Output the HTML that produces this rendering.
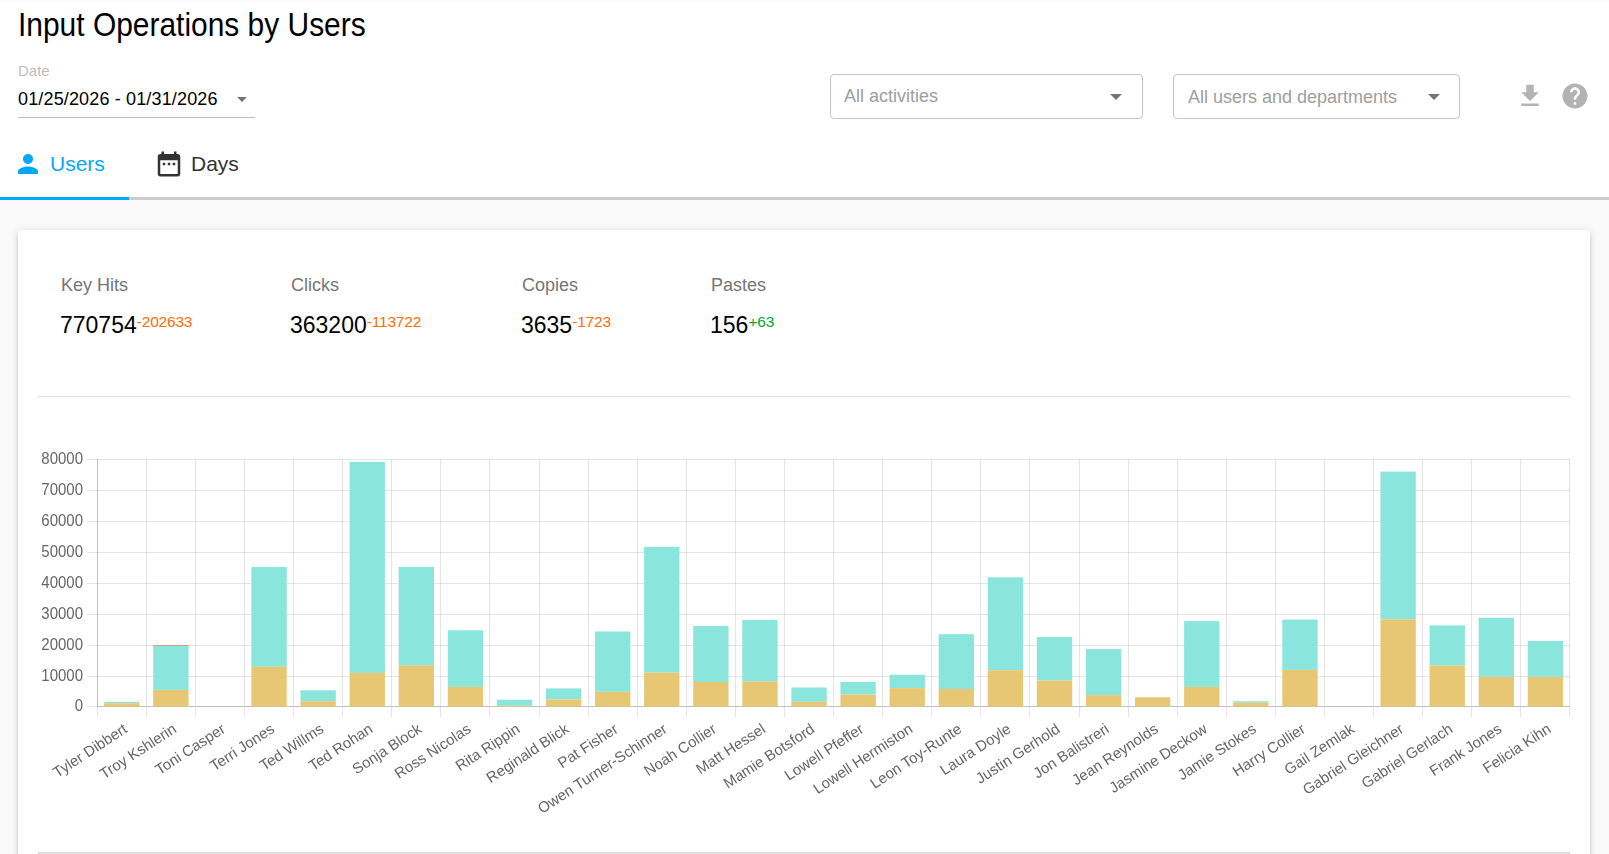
<!DOCTYPE html>
<html><head><meta charset="utf-8">
<style>
html,body{margin:0;padding:0;}
body{width:1609px;height:854px;overflow:hidden;position:relative;background:#fafafa;font-family:"Liberation Sans",sans-serif;}
.abs{position:absolute;white-space:nowrap;}
#top{position:absolute;left:0;top:0;width:1609px;height:197px;background:#fff;}
#topstrip{position:absolute;left:0;top:0;width:1609px;height:3px;background:#fcfcfc;}
.title{left:18px;top:5px;font-size:33px;color:#000;line-height:40px;transform:scaleX(0.907);transform-origin:0 0;}
.datelbl{left:18px;top:62px;font-size:15px;color:#bdbdbd;line-height:17px;}
.dateval{left:18px;top:88px;font-size:18px;color:#000;line-height:22px;letter-spacing:0.15px;}
.dateline{left:18px;top:117px;width:237px;height:1px;background:#bdbdbd;}
.sel{position:absolute;box-sizing:border-box;border:1px solid #c6c6c6;border-radius:4px;background:#fff;height:45px;top:74px;}
.seltxt{position:absolute;font-size:18px;color:#9e9e9e;line-height:20px;white-space:nowrap;}
.tri{position:absolute;width:0;height:0;border-left:5px solid transparent;border-right:5px solid transparent;border-top:5px solid #757575;}
.tri6{border-left-width:6px;border-right-width:6px;border-top-width:6px;}
.tabline{left:0;top:197px;width:1609px;height:3px;background:#cccccc;}
.tabsel{left:0;top:197px;width:129px;height:3px;background:#03a9f4;}
.tab{font-size:21px;line-height:25px;top:151px;}
.card{left:18px;top:230px;width:1572px;height:700px;background:#fff;border-radius:4px;box-shadow:0 1px 8px 0 rgba(0,0,0,.12),0 3px 4px 0 rgba(0,0,0,.14),0 3px 3px -2px rgba(0,0,0,.2);}
.slbl{font-size:18px;color:#757575;line-height:20px;top:275px;}
.sval{font-size:23px;color:#000;line-height:27px;top:312px;margin-left:-1px;}
.sval sup{font-size:15.5px;vertical-align:top;position:relative;top:-4.5px;letter-spacing:-0.2px;}
.neg{color:#ff6d00;}
.pos{color:#00a834;}
.sep{left:38px;top:396px;width:1532px;height:1px;background:#e0e0e0;}
.sep2{left:38px;top:852px;width:1532px;height:2px;background:#e0e0e0;}
svg text.yl{font-family:"Liberation Sans",sans-serif;font-size:15px;fill:#666;}
svg text.xl{font-family:"Liberation Sans",sans-serif;font-size:15px;fill:#666;}
</style></head><body>
<div id="top"></div>
<div id="topstrip"></div>
<div class="abs title">Input Operations by Users</div>
<div class="abs datelbl">Date</div>
<div class="abs dateval">01/25/2026 - 01/31/2026</div>
<div class="tri" style="left:237px;top:97px;"></div>
<div class="abs dateline"></div>
<div class="sel" style="left:830px;width:313px;"></div>
<div class="seltxt" style="left:844px;top:86px;">All activities</div>
<div class="tri tri6" style="left:1110px;top:94px;"></div>
<div class="sel" style="left:1173px;width:287px;"></div>
<div class="seltxt" style="left:1188px;top:87px;">All users and departments</div>
<div class="tri tri6" style="left:1428px;top:94px;"></div>
<svg class="abs" style="left:1515px;top:81px" width="30" height="30" viewBox="0 0 24 24"><path fill="#b3b3b3" d="M19 9h-4V3H9v6H5l7 7 7-7zM5 18v2h14v-2H5z"/></svg>
<svg class="abs" style="left:1560px;top:81px" width="30" height="30" viewBox="0 0 24 24"><path fill="#b3b3b3" d="M12 2C6.48 2 2 6.48 2 12s4.48 10 10 10 10-4.48 10-10S17.52 2 12 2zm1 17h-2v-2h2v2zm2.07-7.750l-.9.92C13.45 12.9 13 13.5 13 15h-2v-.5c0-1.1.45-2.1 1.17-2.830l1.24-1.26c.37-.36.59-.86.59-1.41 0-1.1-.9-2-2-2s-2 .9-2 2H8c0-2.21 1.79-4 4-4s4 1.79 4 4c0 .88-.36 1.68-.93 2.250z"/></svg>
<svg class="abs" style="left:13px;top:149px" width="30" height="30" viewBox="0 0 24 24"><path fill="#03a9f4" d="M12 12c2.21 0 4-1.79 4-4s-1.79-4-4-4-4 1.79-4 4 1.79 4 4 4zm0 2c-2.67 0-8 1.34-8 4v2h16v-2c0-2.66-5.33-4-8-4z"/></svg>
<div class="abs tab" style="left:50px;color:#03a9f4;">Users</div>
<svg class="abs" style="left:154px;top:149px" width="30" height="30" viewBox="0 0 24 24"><path fill="#333" d="M9 11H7v2h2v-2zm4 0h-2v2h2v-2zm4 0h-2v2h2v-2zm2-7h-1V2h-2v2H8V2H6v2H5c-1.11 0-1.99.9-1.99 2L3 20c0 1.1.89 2 2 2h14c1.1 0 2-.9 2-2V6c0-1.1-.9-2-2-2zm0 16H5V9h14v11z"/></svg>
<div class="abs tab" style="left:191px;color:#333;">Days</div>
<div class="abs tabline"></div>
<div class="abs tabsel"></div>
<div class="abs card"></div>
<div class="abs slbl" style="left:61px;">Key Hits</div>
<div class="abs sval" style="left:61px;">770754<sup class="neg">-202633</sup></div>
<div class="abs slbl" style="left:291px;">Clicks</div>
<div class="abs sval" style="left:291px;">363200<sup class="neg">-113722</sup></div>
<div class="abs slbl" style="left:522px;">Copies</div>
<div class="abs sval" style="left:522px;">3635<sup class="neg">-1723</sup></div>
<div class="abs slbl" style="left:711px;">Pastes</div>
<div class="abs sval" style="left:711px;">156<sup class="pos">+63</sup></div>
<div class="abs sep"></div>
<svg class="abs" style="left:0;top:0;will-change:transform" width="1609" height="854" viewBox="0 0 1609 854">
<line x1="87" y1="459.5" x2="1570" y2="459.5" stroke="rgba(0,0,0,0.1)" stroke-width="1"/>
<line x1="87" y1="490.5" x2="1570" y2="490.5" stroke="rgba(0,0,0,0.1)" stroke-width="1"/>
<line x1="87" y1="521.5" x2="1570" y2="521.5" stroke="rgba(0,0,0,0.1)" stroke-width="1"/>
<line x1="87" y1="552.5" x2="1570" y2="552.5" stroke="rgba(0,0,0,0.1)" stroke-width="1"/>
<line x1="87" y1="583.5" x2="1570" y2="583.5" stroke="rgba(0,0,0,0.1)" stroke-width="1"/>
<line x1="87" y1="614.5" x2="1570" y2="614.5" stroke="rgba(0,0,0,0.1)" stroke-width="1"/>
<line x1="87" y1="645.5" x2="1570" y2="645.5" stroke="rgba(0,0,0,0.1)" stroke-width="1"/>
<line x1="87" y1="676.5" x2="1570" y2="676.5" stroke="rgba(0,0,0,0.1)" stroke-width="1"/>
<line x1="87" y1="706.5" x2="97" y2="706.5" stroke="rgba(0,0,0,0.1)" stroke-width="1"/>
<line x1="97" y1="706.5" x2="1570" y2="706.5" stroke="rgba(0,0,0,0.25)" stroke-width="1"/>
<line x1="97.5" y1="459" x2="97.5" y2="706" stroke="rgba(0,0,0,0.25)" stroke-width="1"/>
<line x1="97.5" y1="707" x2="97.5" y2="717" stroke="rgba(0,0,0,0.1)" stroke-width="1"/>
<line x1="146.5" y1="459" x2="146.5" y2="706" stroke="rgba(0,0,0,0.1)" stroke-width="1"/>
<line x1="146.5" y1="707" x2="146.5" y2="717" stroke="rgba(0,0,0,0.1)" stroke-width="1"/>
<line x1="195.5" y1="459" x2="195.5" y2="706" stroke="rgba(0,0,0,0.1)" stroke-width="1"/>
<line x1="195.5" y1="707" x2="195.5" y2="717" stroke="rgba(0,0,0,0.1)" stroke-width="1"/>
<line x1="244.5" y1="459" x2="244.5" y2="706" stroke="rgba(0,0,0,0.1)" stroke-width="1"/>
<line x1="244.5" y1="707" x2="244.5" y2="717" stroke="rgba(0,0,0,0.1)" stroke-width="1"/>
<line x1="293.5" y1="459" x2="293.5" y2="706" stroke="rgba(0,0,0,0.1)" stroke-width="1"/>
<line x1="293.5" y1="707" x2="293.5" y2="717" stroke="rgba(0,0,0,0.1)" stroke-width="1"/>
<line x1="342.5" y1="459" x2="342.5" y2="706" stroke="rgba(0,0,0,0.1)" stroke-width="1"/>
<line x1="342.5" y1="707" x2="342.5" y2="717" stroke="rgba(0,0,0,0.1)" stroke-width="1"/>
<line x1="391.5" y1="459" x2="391.5" y2="706" stroke="rgba(0,0,0,0.1)" stroke-width="1"/>
<line x1="391.5" y1="707" x2="391.5" y2="717" stroke="rgba(0,0,0,0.1)" stroke-width="1"/>
<line x1="440.5" y1="459" x2="440.5" y2="706" stroke="rgba(0,0,0,0.1)" stroke-width="1"/>
<line x1="440.5" y1="707" x2="440.5" y2="717" stroke="rgba(0,0,0,0.1)" stroke-width="1"/>
<line x1="489.5" y1="459" x2="489.5" y2="706" stroke="rgba(0,0,0,0.1)" stroke-width="1"/>
<line x1="489.5" y1="707" x2="489.5" y2="717" stroke="rgba(0,0,0,0.1)" stroke-width="1"/>
<line x1="539.5" y1="459" x2="539.5" y2="706" stroke="rgba(0,0,0,0.1)" stroke-width="1"/>
<line x1="539.5" y1="707" x2="539.5" y2="717" stroke="rgba(0,0,0,0.1)" stroke-width="1"/>
<line x1="588.5" y1="459" x2="588.5" y2="706" stroke="rgba(0,0,0,0.1)" stroke-width="1"/>
<line x1="588.5" y1="707" x2="588.5" y2="717" stroke="rgba(0,0,0,0.1)" stroke-width="1"/>
<line x1="637.5" y1="459" x2="637.5" y2="706" stroke="rgba(0,0,0,0.1)" stroke-width="1"/>
<line x1="637.5" y1="707" x2="637.5" y2="717" stroke="rgba(0,0,0,0.1)" stroke-width="1"/>
<line x1="686.5" y1="459" x2="686.5" y2="706" stroke="rgba(0,0,0,0.1)" stroke-width="1"/>
<line x1="686.5" y1="707" x2="686.5" y2="717" stroke="rgba(0,0,0,0.1)" stroke-width="1"/>
<line x1="735.5" y1="459" x2="735.5" y2="706" stroke="rgba(0,0,0,0.1)" stroke-width="1"/>
<line x1="735.5" y1="707" x2="735.5" y2="717" stroke="rgba(0,0,0,0.1)" stroke-width="1"/>
<line x1="784.5" y1="459" x2="784.5" y2="706" stroke="rgba(0,0,0,0.1)" stroke-width="1"/>
<line x1="784.5" y1="707" x2="784.5" y2="717" stroke="rgba(0,0,0,0.1)" stroke-width="1"/>
<line x1="833.5" y1="459" x2="833.5" y2="706" stroke="rgba(0,0,0,0.1)" stroke-width="1"/>
<line x1="833.5" y1="707" x2="833.5" y2="717" stroke="rgba(0,0,0,0.1)" stroke-width="1"/>
<line x1="882.5" y1="459" x2="882.5" y2="706" stroke="rgba(0,0,0,0.1)" stroke-width="1"/>
<line x1="882.5" y1="707" x2="882.5" y2="717" stroke="rgba(0,0,0,0.1)" stroke-width="1"/>
<line x1="931.5" y1="459" x2="931.5" y2="706" stroke="rgba(0,0,0,0.1)" stroke-width="1"/>
<line x1="931.5" y1="707" x2="931.5" y2="717" stroke="rgba(0,0,0,0.1)" stroke-width="1"/>
<line x1="980.5" y1="459" x2="980.5" y2="706" stroke="rgba(0,0,0,0.1)" stroke-width="1"/>
<line x1="980.5" y1="707" x2="980.5" y2="717" stroke="rgba(0,0,0,0.1)" stroke-width="1"/>
<line x1="1029.5" y1="459" x2="1029.5" y2="706" stroke="rgba(0,0,0,0.1)" stroke-width="1"/>
<line x1="1029.5" y1="707" x2="1029.5" y2="717" stroke="rgba(0,0,0,0.1)" stroke-width="1"/>
<line x1="1079.5" y1="459" x2="1079.5" y2="706" stroke="rgba(0,0,0,0.1)" stroke-width="1"/>
<line x1="1079.5" y1="707" x2="1079.5" y2="717" stroke="rgba(0,0,0,0.1)" stroke-width="1"/>
<line x1="1128.5" y1="459" x2="1128.5" y2="706" stroke="rgba(0,0,0,0.1)" stroke-width="1"/>
<line x1="1128.5" y1="707" x2="1128.5" y2="717" stroke="rgba(0,0,0,0.1)" stroke-width="1"/>
<line x1="1177.5" y1="459" x2="1177.5" y2="706" stroke="rgba(0,0,0,0.1)" stroke-width="1"/>
<line x1="1177.5" y1="707" x2="1177.5" y2="717" stroke="rgba(0,0,0,0.1)" stroke-width="1"/>
<line x1="1226.5" y1="459" x2="1226.5" y2="706" stroke="rgba(0,0,0,0.1)" stroke-width="1"/>
<line x1="1226.5" y1="707" x2="1226.5" y2="717" stroke="rgba(0,0,0,0.1)" stroke-width="1"/>
<line x1="1275.5" y1="459" x2="1275.5" y2="706" stroke="rgba(0,0,0,0.1)" stroke-width="1"/>
<line x1="1275.5" y1="707" x2="1275.5" y2="717" stroke="rgba(0,0,0,0.1)" stroke-width="1"/>
<line x1="1324.5" y1="459" x2="1324.5" y2="706" stroke="rgba(0,0,0,0.1)" stroke-width="1"/>
<line x1="1324.5" y1="707" x2="1324.5" y2="717" stroke="rgba(0,0,0,0.1)" stroke-width="1"/>
<line x1="1373.5" y1="459" x2="1373.5" y2="706" stroke="rgba(0,0,0,0.1)" stroke-width="1"/>
<line x1="1373.5" y1="707" x2="1373.5" y2="717" stroke="rgba(0,0,0,0.1)" stroke-width="1"/>
<line x1="1422.5" y1="459" x2="1422.5" y2="706" stroke="rgba(0,0,0,0.1)" stroke-width="1"/>
<line x1="1422.5" y1="707" x2="1422.5" y2="717" stroke="rgba(0,0,0,0.1)" stroke-width="1"/>
<line x1="1471.5" y1="459" x2="1471.5" y2="706" stroke="rgba(0,0,0,0.1)" stroke-width="1"/>
<line x1="1471.5" y1="707" x2="1471.5" y2="717" stroke="rgba(0,0,0,0.1)" stroke-width="1"/>
<line x1="1520.5" y1="459" x2="1520.5" y2="706" stroke="rgba(0,0,0,0.1)" stroke-width="1"/>
<line x1="1520.5" y1="707" x2="1520.5" y2="717" stroke="rgba(0,0,0,0.1)" stroke-width="1"/>
<line x1="1569.5" y1="459" x2="1569.5" y2="706" stroke="rgba(0,0,0,0.1)" stroke-width="1"/>
<line x1="1569.5" y1="707" x2="1569.5" y2="717" stroke="rgba(0,0,0,0.1)" stroke-width="1"/>
<text transform="translate(83,458.6) scale(1,1.09)" text-anchor="end" dominant-baseline="central" class="yl">80000</text>
<text transform="translate(83,489.6) scale(1,1.09)" text-anchor="end" dominant-baseline="central" class="yl">70000</text>
<text transform="translate(83,520.6) scale(1,1.09)" text-anchor="end" dominant-baseline="central" class="yl">60000</text>
<text transform="translate(83,551.6) scale(1,1.09)" text-anchor="end" dominant-baseline="central" class="yl">50000</text>
<text transform="translate(83,582.6) scale(1,1.09)" text-anchor="end" dominant-baseline="central" class="yl">40000</text>
<text transform="translate(83,613.6) scale(1,1.09)" text-anchor="end" dominant-baseline="central" class="yl">30000</text>
<text transform="translate(83,644.6) scale(1,1.09)" text-anchor="end" dominant-baseline="central" class="yl">20000</text>
<text transform="translate(83,675.6) scale(1,1.09)" text-anchor="end" dominant-baseline="central" class="yl">10000</text>
<text transform="translate(83,705.6) scale(1,1.09)" text-anchor="end" dominant-baseline="central" class="yl">0</text>
<rect x="104.12" y="701.8" width="35.34" height="1.40" fill="#8ae6dd"/>
<rect x="104.12" y="703.2" width="35.34" height="3.30" fill="#e8c774"/>
<rect x="153.21" y="645.9" width="35.34" height="44.00" fill="#8ae6dd"/>
<rect x="153.21" y="689.9" width="35.34" height="16.60" fill="#e8c774"/>
<rect x="251.39" y="566.9" width="35.34" height="99.90" fill="#8ae6dd"/>
<rect x="251.39" y="666.8" width="35.34" height="39.70" fill="#e8c774"/>
<rect x="300.48" y="690.3" width="35.34" height="10.90" fill="#8ae6dd"/>
<rect x="300.48" y="701.2" width="35.34" height="5.30" fill="#e8c774"/>
<rect x="349.57" y="461.9" width="35.34" height="211.00" fill="#8ae6dd"/>
<rect x="349.57" y="672.9" width="35.34" height="33.60" fill="#e8c774"/>
<rect x="398.66" y="566.9" width="35.34" height="98.40" fill="#8ae6dd"/>
<rect x="398.66" y="665.3" width="35.34" height="41.20" fill="#e8c774"/>
<rect x="447.75" y="630.3" width="35.34" height="56.60" fill="#8ae6dd"/>
<rect x="447.75" y="686.9" width="35.34" height="19.60" fill="#e8c774"/>
<rect x="496.84" y="699.7" width="35.34" height="6.10" fill="#8ae6dd"/>
<rect x="496.84" y="705.8" width="35.34" height="0.70" fill="#e8c774"/>
<rect x="545.93" y="688.4" width="35.34" height="11.00" fill="#8ae6dd"/>
<rect x="545.93" y="699.4" width="35.34" height="7.10" fill="#e8c774"/>
<rect x="595.02" y="631.5" width="35.34" height="60.30" fill="#8ae6dd"/>
<rect x="595.02" y="691.8" width="35.34" height="14.70" fill="#e8c774"/>
<rect x="644.11" y="546.8" width="35.34" height="125.80" fill="#8ae6dd"/>
<rect x="644.11" y="672.6" width="35.34" height="33.90" fill="#e8c774"/>
<rect x="693.20" y="626" width="35.34" height="56.00" fill="#8ae6dd"/>
<rect x="693.20" y="682" width="35.34" height="24.50" fill="#e8c774"/>
<rect x="742.29" y="619.9" width="35.34" height="61.50" fill="#8ae6dd"/>
<rect x="742.29" y="681.4" width="35.34" height="25.10" fill="#e8c774"/>
<rect x="791.38" y="687.5" width="35.34" height="14.30" fill="#8ae6dd"/>
<rect x="791.38" y="701.8" width="35.34" height="4.70" fill="#e8c774"/>
<rect x="840.47" y="682" width="35.34" height="12.50" fill="#8ae6dd"/>
<rect x="840.47" y="694.5" width="35.34" height="12.00" fill="#e8c774"/>
<rect x="889.56" y="674.7" width="35.34" height="13.40" fill="#8ae6dd"/>
<rect x="889.56" y="688.1" width="35.34" height="18.40" fill="#e8c774"/>
<rect x="938.65" y="634.2" width="35.34" height="54.80" fill="#8ae6dd"/>
<rect x="938.65" y="689" width="35.34" height="17.50" fill="#e8c774"/>
<rect x="987.74" y="577.3" width="35.34" height="92.90" fill="#8ae6dd"/>
<rect x="987.74" y="670.2" width="35.34" height="36.30" fill="#e8c774"/>
<rect x="1036.83" y="637" width="35.34" height="43.50" fill="#8ae6dd"/>
<rect x="1036.83" y="680.5" width="35.34" height="26.00" fill="#e8c774"/>
<rect x="1085.92" y="649.1" width="35.34" height="46.00" fill="#8ae6dd"/>
<rect x="1085.92" y="695.1" width="35.34" height="11.40" fill="#e8c774"/>
<rect x="1135.01" y="697.3" width="35.34" height="0.00" fill="#8ae6dd"/>
<rect x="1135.01" y="697.3" width="35.34" height="9.20" fill="#e8c774"/>
<rect x="1184.10" y="621.1" width="35.34" height="65.80" fill="#8ae6dd"/>
<rect x="1184.10" y="686.9" width="35.34" height="19.60" fill="#e8c774"/>
<rect x="1233.19" y="701.2" width="35.34" height="1.50" fill="#8ae6dd"/>
<rect x="1233.19" y="702.7" width="35.34" height="3.80" fill="#e8c774"/>
<rect x="1282.28" y="619.6" width="35.34" height="50.30" fill="#8ae6dd"/>
<rect x="1282.28" y="669.9" width="35.34" height="36.60" fill="#e8c774"/>
<rect x="1380.46" y="471.6" width="35.34" height="147.70" fill="#8ae6dd"/>
<rect x="1380.46" y="619.3" width="35.34" height="87.20" fill="#e8c774"/>
<rect x="1429.55" y="625.4" width="35.34" height="40.20" fill="#8ae6dd"/>
<rect x="1429.55" y="665.6" width="35.34" height="40.90" fill="#e8c774"/>
<rect x="1478.64" y="617.8" width="35.34" height="59.10" fill="#8ae6dd"/>
<rect x="1478.64" y="676.9" width="35.34" height="29.60" fill="#e8c774"/>
<rect x="1527.73" y="640.9" width="35.34" height="36.00" fill="#8ae6dd"/>
<rect x="1527.73" y="676.9" width="35.34" height="29.60" fill="#e8c774"/>
<rect x="153.21" y="645" width="35.34" height="1" fill="#e4998a"/>
<text transform="translate(125.30,726.8) rotate(-33.2)" text-anchor="end" dominant-baseline="central" class="xl">Tyler Dibbert</text>
<text transform="translate(174.38,726.8) rotate(-33.2)" text-anchor="end" dominant-baseline="central" class="xl">Troy Kshlerin</text>
<text transform="translate(223.48,726.8) rotate(-33.2)" text-anchor="end" dominant-baseline="central" class="xl">Toni Casper</text>
<text transform="translate(272.56,726.8) rotate(-33.2)" text-anchor="end" dominant-baseline="central" class="xl">Terri Jones</text>
<text transform="translate(321.66,726.8) rotate(-33.2)" text-anchor="end" dominant-baseline="central" class="xl">Ted Willms</text>
<text transform="translate(370.75,726.8) rotate(-33.2)" text-anchor="end" dominant-baseline="central" class="xl">Ted Rohan</text>
<text transform="translate(419.84,726.8) rotate(-33.2)" text-anchor="end" dominant-baseline="central" class="xl">Sonja Block</text>
<text transform="translate(468.93,726.8) rotate(-33.2)" text-anchor="end" dominant-baseline="central" class="xl">Ross Nicolas</text>
<text transform="translate(518.02,726.8) rotate(-33.2)" text-anchor="end" dominant-baseline="central" class="xl">Rita Rippin</text>
<text transform="translate(567.11,726.8) rotate(-33.2)" text-anchor="end" dominant-baseline="central" class="xl">Reginald Blick</text>
<text transform="translate(616.20,726.8) rotate(-33.2)" text-anchor="end" dominant-baseline="central" class="xl">Pat Fisher</text>
<text transform="translate(665.29,726.8) rotate(-33.2)" text-anchor="end" dominant-baseline="central" class="xl">Owen Turner-Schinner</text>
<text transform="translate(714.38,726.8) rotate(-33.2)" text-anchor="end" dominant-baseline="central" class="xl">Noah Collier</text>
<text transform="translate(763.47,726.8) rotate(-33.2)" text-anchor="end" dominant-baseline="central" class="xl">Matt Hessel</text>
<text transform="translate(812.56,726.8) rotate(-33.2)" text-anchor="end" dominant-baseline="central" class="xl">Mamie Botsford</text>
<text transform="translate(861.65,726.8) rotate(-33.2)" text-anchor="end" dominant-baseline="central" class="xl">Lowell Pfeffer</text>
<text transform="translate(910.74,726.8) rotate(-33.2)" text-anchor="end" dominant-baseline="central" class="xl">Lowell Hermiston</text>
<text transform="translate(959.83,726.8) rotate(-33.2)" text-anchor="end" dominant-baseline="central" class="xl">Leon Toy-Runte</text>
<text transform="translate(1008.92,726.8) rotate(-33.2)" text-anchor="end" dominant-baseline="central" class="xl">Laura Doyle</text>
<text transform="translate(1058.01,726.8) rotate(-33.2)" text-anchor="end" dominant-baseline="central" class="xl">Justin Gerhold</text>
<text transform="translate(1107.10,726.8) rotate(-33.2)" text-anchor="end" dominant-baseline="central" class="xl">Jon Balistreri</text>
<text transform="translate(1156.19,726.8) rotate(-33.2)" text-anchor="end" dominant-baseline="central" class="xl">Jean Reynolds</text>
<text transform="translate(1205.28,726.8) rotate(-33.2)" text-anchor="end" dominant-baseline="central" class="xl">Jasmine Deckow</text>
<text transform="translate(1254.37,726.8) rotate(-33.2)" text-anchor="end" dominant-baseline="central" class="xl">Jamie Stokes</text>
<text transform="translate(1303.46,726.8) rotate(-33.2)" text-anchor="end" dominant-baseline="central" class="xl">Harry Collier</text>
<text transform="translate(1352.55,726.8) rotate(-33.2)" text-anchor="end" dominant-baseline="central" class="xl">Gail Zemlak</text>
<text transform="translate(1401.63,726.8) rotate(-33.2)" text-anchor="end" dominant-baseline="central" class="xl">Gabriel Gleichner</text>
<text transform="translate(1450.73,726.8) rotate(-33.2)" text-anchor="end" dominant-baseline="central" class="xl">Gabriel Gerlach</text>
<text transform="translate(1499.82,726.8) rotate(-33.2)" text-anchor="end" dominant-baseline="central" class="xl">Frank Jones</text>
<text transform="translate(1548.91,726.8) rotate(-33.2)" text-anchor="end" dominant-baseline="central" class="xl">Felicia Kihn</text>
</svg>
<div class="abs sep2"></div>
</body></html>
